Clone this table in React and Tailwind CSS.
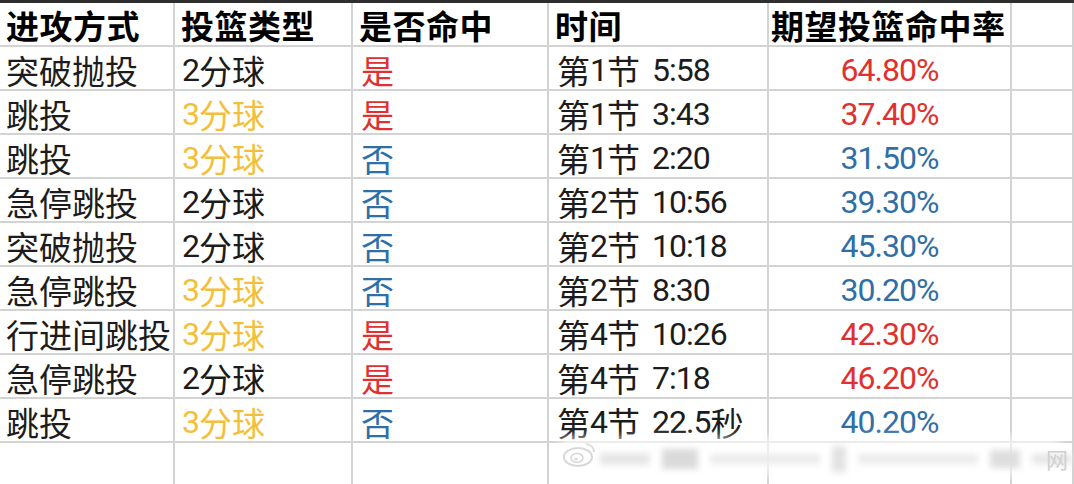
import React from "react";

const R = "text-[#e0302f]";
const Y = "text-[#f3bf3a]";
const B = "text-[#2f6fa8]";
const K = "text-[#1c1c1c]";

const rows = [
  ["突破抛投", ["2分球", K], ["是", R], "第1节 5:58", ["64.80%", R]],
  ["跳投", ["3分球", Y], ["是", R], "第1节 3:43", ["37.40%", R]],
  ["跳投", ["3分球", Y], ["否", B], "第1节 2:20", ["31.50%", B]],
  ["急停跳投", ["2分球", K], ["否", B], "第2节 10:56", ["39.30%", B]],
  ["突破抛投", ["2分球", K], ["否", B], "第2节 10:18", ["45.30%", B]],
  ["急停跳投", ["3分球", Y], ["否", B], "第2节 8:30", ["30.20%", B]],
  ["行进间跳投", ["3分球", Y], ["是", R], "第4节 10:26", ["42.30%", R]],
  ["急停跳投", ["2分球", K], ["是", R], "第4节 7:18", ["46.20%", R]],
  ["跳投", ["3分球", Y], ["否", B], "第4节 22.5秒", ["40.20%", B]],
];

function Txt({ s }) {
  const parts = s.split(/([\u4e00-\u9fff]+| )/).filter((p) => p !== "");
  return (
    <>
      {parts.map((p, i) => {
        if (p === " ") return <span key={i} className="inline-block w-[12px]" />;
        if (/[\u4e00-\u9fff]/.test(p)) return <span key={i}>{p}</span>;
        return (
          <span key={i} className="font-['Roboto',sans-serif] text-[32px] tracking-[-1px]">
            {p}
          </span>
        );
      })}
    </>
  );
}

const cols = "grid grid-cols-[175px_178px_196px_220px_243px_1fr]";
const cell =
  "border-r-2 border-b-2 border-[#d3d3d3] flex items-center h-[44px] pt-[4px] overflow-visible whitespace-nowrap";

export default function App() {
  return (
    <div className="w-[1074px] h-[484px] bg-white overflow-hidden relative font-['Noto_Sans_CJK_SC','Noto_Sans',sans-serif]">
      <div className="border-t-[3px] border-[#2e2e2e]">
        <div className={`${cols} text-[33px] font-bold text-black`}>
          {["进攻方式", "投篮类型", "是否命中", "时间", "期望投篮命中率", ""].map((t, i) => (
            <div
              key={i}
              className={`${cell} pt-[4px] ${i === 4 ? "pl-[2px]" : "pl-[6px]"} tracking-[0.5px]`}
            >
              {t}
            </div>
          ))}
        </div>
        {rows.map((r, i) => (
          <div key={i} className={`${cols} text-[33px] leading-none`}>
            <div className={`${cell} pl-[6px] ${K} relative z-10`}>
              <Txt s={r[0]} />
            </div>
            <div className={`${cell} pl-[7px] ${r[1][1]}`}>
              <Txt s={r[1][0]} />
            </div>
            <div className={`${cell} pl-[8px] ${r[2][1]}`}>
              <Txt s={r[2][0]} />
            </div>
            <div className={`${cell} pl-[8px] ${K}`}>
              <Txt s={r[3]} />
            </div>
            <div className={`${cell} justify-center ${r[4][1]}`}>
              <Txt s={r[4][0]} />
            </div>
            <div className={cell}></div>
          </div>
        ))}
        <div className={`${cols} h-[60px]`}>
          {[0, 1, 2, 3, 4, 5].map((i) => (
            <div key={i} className="border-r-2 border-[#d3d3d3] h-[60px]"></div>
          ))}
        </div>
      </div>
      {/* watermark */}
      <div className="absolute left-[560px] top-[436px] w-[500px] h-[40px] bg-white/60 blur-[4px]" />
      <div className="absolute left-[562px] top-[438px] flex items-center opacity-70">
        <svg width="36" height="30" viewBox="0 0 36 30">
          <ellipse cx="16" cy="19" rx="14" ry="9" fill="none" stroke="#c8c8c8" strokeWidth="2" />
          <ellipse cx="15" cy="20" rx="6" ry="4.5" fill="none" stroke="#c8c8c8" strokeWidth="1.6" />
          <circle cx="14" cy="21" r="1.6" fill="#c8c8c8" />
          <path d="M24 6 a8 8 0 0 1 8 8" fill="none" stroke="#d0d0d0" strokeWidth="2" />
        </svg>
      </div>
      <div className="absolute left-[600px] top-[446px] flex items-center gap-3 blur-[3px]">
        <div className="w-[50px] h-[12px] bg-[#e6e6e6]" />
        <div className="w-[36px] h-[20px] bg-[#dadada]" />
        <div className="w-[110px] h-[10px] bg-[#ebebeb]" />
        <div className="w-[14px] h-[26px] bg-[#e2e2e2]" />
        <div className="w-[120px] h-[10px] bg-[#ebebeb]" />
        <div className="w-[30px] h-[18px] bg-[#dedede]" />
        <div className="w-[40px] h-[10px] bg-[#e6e6e6]" />
      </div>
      <div className="absolute left-[1046px] top-[442px] text-[22px] text-[#d0d0d0]">网</div>
    </div>
  );
}
